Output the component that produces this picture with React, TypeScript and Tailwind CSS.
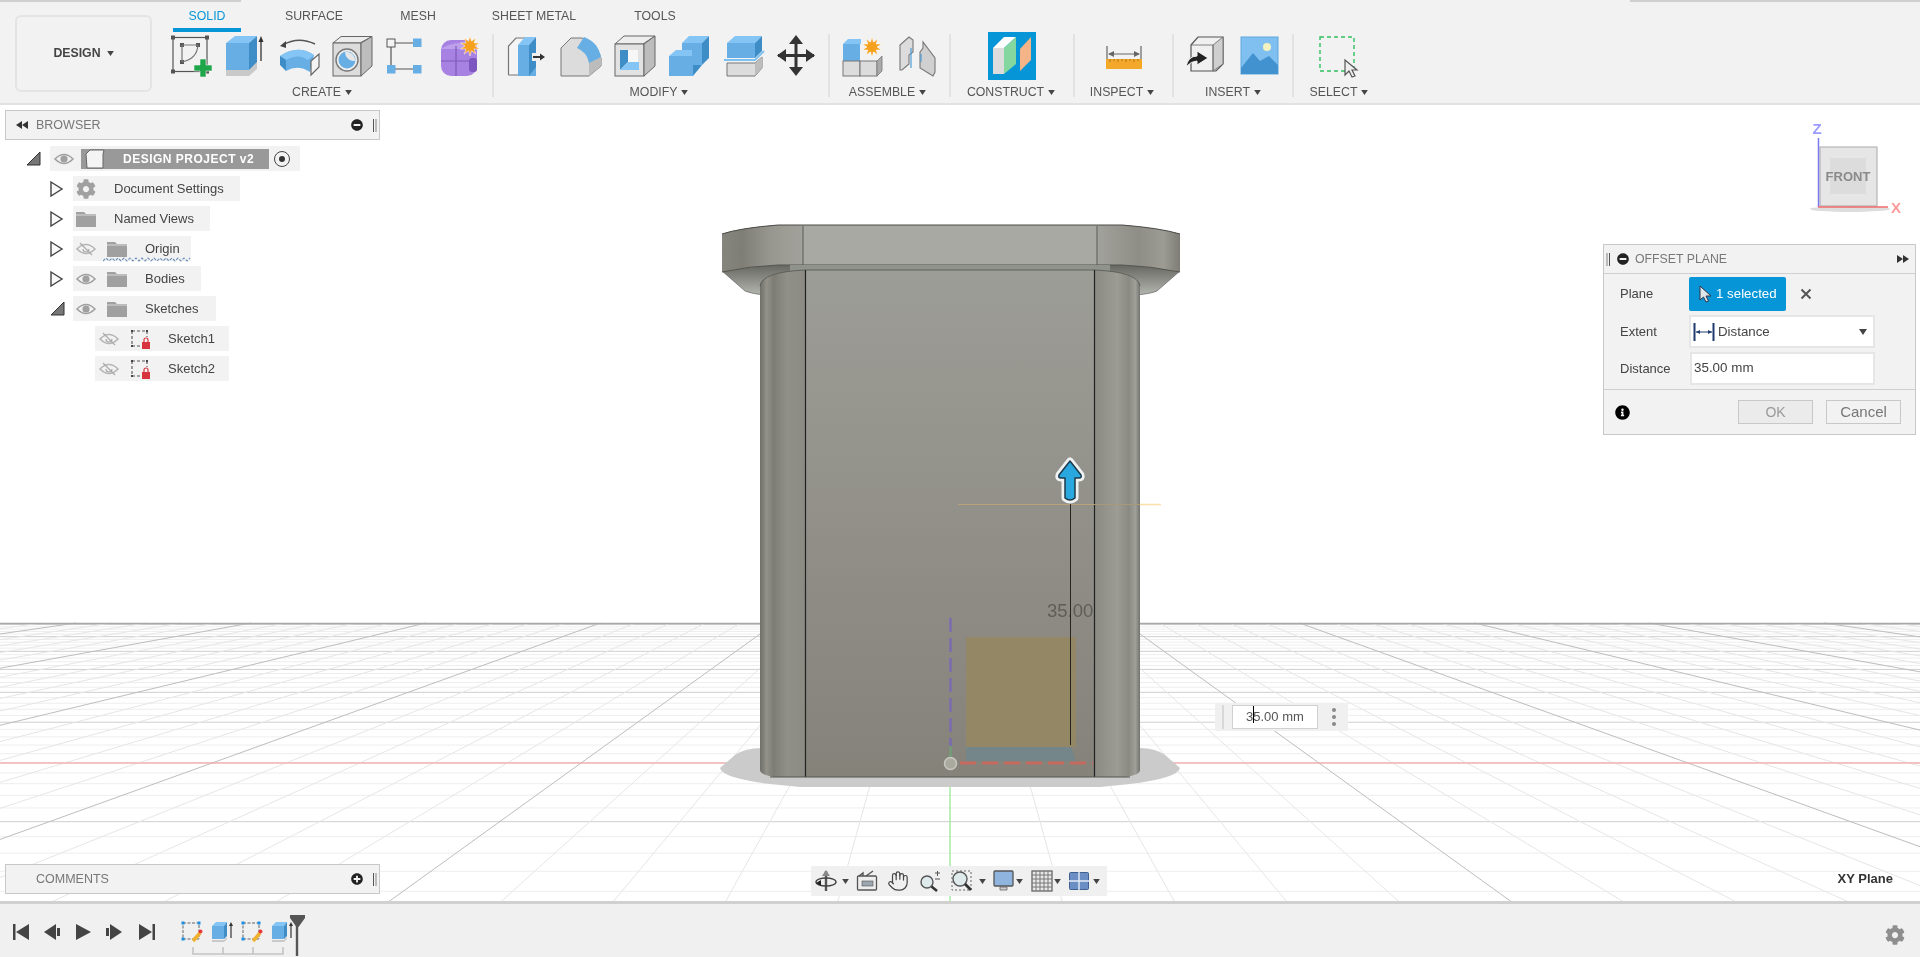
import React from "react";
import { Hand } from "lucide-react";
import { FaCog, FaInfoCircle, FaMinusCircle, FaPlusCircle } from "react-icons/fa";

const BLUE = "#66aee3";
const BLUE_TOP = "#85c5f5";
const BLUE_SIDE = "#3f8dc6";
const EDGE = "#666";

const Svg: React.FC<{ w?: number; h?: number; children: React.ReactNode }> = ({ w = 44, h = 44, children }) => (
  <svg width={w} height={h} viewBox={`0 0 ${w} ${h}`} className="shrink-0 overflow-visible">
    {children}
  </svg>
);

const Caret: React.FC<{ size?: number; className?: string }> = ({ size = 7, className = "" }) => (
  <svg width={size} height={size - 2} viewBox="0 0 8 6" className={`inline-block shrink-0 ${className}`}>
    <polygon points="0,0 8,0 4,6" fill="#444" />
  </svg>
);

/* ---------- toolbar icons ---------- */
const SketchIcon = () => (
  <Svg>
    <rect x="3" y="3.5" width="34" height="34" fill="none" stroke="#555" strokeWidth="1.2" />
    {[[3, 3.5], [37, 3.5], [3, 37.5], [37, 37.5], [12, 11], [28, 11], [12, 28]].map(([x, y]) => (
      <rect key={`${x}-${y}`} x={x - 2} y={y - 2} width="4" height="4" fill="#555" />
    ))}
    <path d="M12 11H28M12 11V28M28 11Q27 25 12 28" fill="none" stroke="#777" strokeWidth="1.2" />
    <path d="M30 25h6v6h6v6h-6v6h-6v-6h-6v-6h6z" fill="#1fa64a" stroke="#f2f2f2" strokeWidth="0.6" />
  </Svg>
);

const ExtrudeIcon = () => (
  <Svg>
    <polygon points="2,35 25,35 33,28 33,35 25,42 2,42" fill="#c9c9c9" />
    <polygon points="2,9 11,2 33,2 25,9" fill={BLUE_TOP} />
    <rect x="2" y="9" width="23" height="27" fill={BLUE} />
    <polygon points="25,9 33,2 33,28 25,36" fill={BLUE_SIDE} />
    <path d="M37 27V6" stroke="#333" strokeWidth="1.3" />
    <polygon points="37,2 34.5,8 39.5,8" fill="#333" />
  </Svg>
);

const RevolveIcon = () => (
  <Svg>
    <path d="M5 11Q20 2 37 10" fill="none" stroke="#555" strokeWidth="1.4" />
    <polygon points="2,12 8,7 8,14" fill="#444" />
    <path d="M2 22Q20 10 36 21L32 38Q20 30 8 37Z" fill={BLUE} />
    <path d="M2 22Q20 10 36 21L30 26Q20 19 8 26Z" fill={BLUE_TOP} />
    <path d="M2 22L8 26V37L2 31Z" fill={BLUE_SIDE} />
    <polygon points="33,27 41,20 41,33 33,41" fill="#f4f4f4" stroke="#666" strokeWidth="1.2" />
  </Svg>
);

const HoleIcon = () => (
  <Svg>
    <polygon points="1,9 9,2.5 40,2.5 28,9" fill="#ececec" stroke={EDGE} strokeWidth="1" />
    <rect x="1" y="9" width="28" height="33" fill="#dcdcdc" stroke={EDGE} strokeWidth="1" />
    <polygon points="29,9 40,2.5 40,32 29,42" fill="#bdbdbd" stroke={EDGE} strokeWidth="1" />
    <circle cx="15" cy="26" r="11" fill="#eee" stroke="#777" strokeWidth="1.4" />
    <circle cx="15" cy="26" r="8.5" fill={BLUE} />
    <path d="M13 18A9 9 0 0 0 23 27 8.5 8.5 0 0 0 13 18Z" fill="#e6e6e6" />
  </Svg>
);

const PatternIcon = () => (
  <Svg>
    <path d="M9 9H28M5 13V31M9 35H28" stroke="#555" strokeWidth="1.2" />
    <rect x="1" y="5" width="8" height="8" fill="#f4f4f4" stroke="#555" />
    <rect x="27" y="4.5" width="8.5" height="8.5" fill={BLUE} />
    <rect x="1" y="31" width="8.5" height="8.5" fill={BLUE} />
    <rect x="27" y="31" width="8.5" height="8.5" fill={BLUE} />
  </Svg>
);

const Star: React.FC<{ cx: number; cy: number; r: number }> = ({ cx, cy, r }) => {
  const pts = Array.from({ length: 20 }, (_, i) => {
    const a = (i * Math.PI) / 10;
    const d = i % 2 ? r * 0.5 : r;
    return `${cx + d * Math.sin(a)},${cy - d * Math.cos(a)}`;
  }).join(" ");
  return <polygon points={pts} fill="#f5a11e" stroke="#fff" strokeWidth="0.5" />;
};

const FormIcon = () => (
  <Svg>
    <rect x="1" y="6" width="36" height="36" rx="10" fill="#a782e2" />
    <path d="M1 15Q10 8 33 8L37 12V15H1Z" fill="#bca0ec" />
    <rect x="29" y="24" width="8" height="14" rx="3" fill="#7e56c0" />
    <path d="M1 27H30M16 12V42" stroke="#7d5bb8" strokeWidth="1.2" />
    <Star cx={30} cy={12} r={10} />
  </Svg>
);

const PressPullIcon = () => (
  <Svg>
    <polygon points="2.5,41 2.5,12 10,4 12,4 12,41" fill="#f4f4f4" />
    <path d="M2.5 41H12M2.5 41V12L10 4H20" fill="none" stroke="#777" strokeWidth="1.2" />
    <polygon points="12,11 19,3 30,3 23,11" fill={BLUE_TOP} />
    <rect x="12" y="11" width="18" height="31" fill={BLUE} />
    <polygon points="23,11 30,3 30,33 23,42" fill={BLUE_SIDE} />
    <rect x="26" y="19" width="5" height="8" fill="#eee" />
    <path d="M27 23H36" stroke="#333" strokeWidth="2" />
    <polygon points="39,23 34,19.5 34,26.5" fill="#333" />
  </Svg>
);

const FilletIcon = () => (
  <Svg>
    <path d="M1 42V14L11 4H22Q34 8 41 24V32L29 42Z" fill="#dcdcdc" stroke="#777" strokeWidth="1" />
    <polygon points="29,42 29,28 41,20 41,32" fill="#bcbcbc" />
    <path d="M17 14L24 3Q38 8 41 23L29 29Q27 18 17 14Z" fill={BLUE} />
  </Svg>
);

const ShellIcon = () => (
  <Svg>
    <polygon points="1,10 10,2 41,2 29,10" fill="#eee" stroke={EDGE} strokeWidth="1" />
    <rect x="1" y="10" width="29" height="32" fill="#e2e2e2" stroke={EDGE} strokeWidth="1" />
    <polygon points="30,10 41,2 41,32 30,42" fill="#bdbdbd" stroke={EDGE} strokeWidth="1" />
    <rect x="6" y="16" width="18" height="20" fill="#f7f7f7" />
    <polygon points="6,16 14,16 14,28 6,36" fill={BLUE_SIDE} />
    <polygon points="14,28 25,28 25,36 6,36" fill={BLUE_TOP} />
  </Svg>
);

const CombineIcon = () => (
  <Svg>
    <polygon points="14,9 21,2 41,2 34,9" fill={BLUE_TOP} />
    <rect x="14" y="9" width="20" height="22" fill={BLUE} />
    <polygon points="34,9 41,2 41,24 34,31" fill={BLUE_SIDE} />
    <polygon points="1,22 8,16 24,16 24,22" fill={BLUE_TOP} />
    <rect x="1" y="22" width="24" height="20" fill={BLUE} />
    <polygon points="25,31 34,31 25,42" fill={BLUE_SIDE} />
  </Svg>
);

const OffsetIcon = () => (
  <Svg>
    <polygon points="5,9 13,2 40,2 33,9" fill={BLUE_TOP} />
    <rect x="5" y="9" width="28" height="15" fill={BLUE} />
    <polygon points="33,9 40,2 40,17 33,24" fill={BLUE_SIDE} />
    <path d="M2 26H33L42 17" fill="none" stroke="#7cc1f2" strokeWidth="1.8" />
    <path d="M5 29H33L40 23V34L33 42H5Z" fill="#dcdcdc" stroke="#777" strokeWidth="1" />
    <polygon points="33,29 40,23 40,34 33,42" fill="#bdbdbd" />
  </Svg>
);

const MoveIcon = () => (
  <Svg>
    <path d="M20 4V39M2 21.5H38" stroke="#333" strokeWidth="3" />
    <polygon points="20,1 13,10 27,10" fill="#333" />
    <polygon points="20,42 13,33 27,33" fill="#333" />
    <polygon points="1,21.5 10,15 10,28" fill="#333" />
    <polygon points="39,21.5 30,15 30,28" fill="#333" />
  </Svg>
);

const NewComponentIcon = () => (
  <Svg>
    <polygon points="2,10 7,5 20,5 20,10" fill={BLUE_TOP} />
    <rect x="2" y="10" width="17" height="17" fill={BLUE} />
    <rect x="2" y="27" width="17" height="15" fill="#dcdcdc" stroke="#777" />
    <rect x="19" y="27" width="17" height="15" fill="#dcdcdc" stroke="#777" />
    <polygon points="36,27 41,22 41,37 36,42" fill="#aaa" stroke="#777" strokeWidth="0.8" />
    <Star cx={31} cy={13} r={10} />
  </Svg>
);

const JointIcon = () => (
  <Svg>
    <path d="M5 36V11L14 3L18 6V18L14 21V30L7 36Z" fill="#dcdcdc" stroke="#777" strokeWidth="1.1" />
    <path d="M25 18L28 14V8L40 24V38L38 42L25 34Z" fill="#d0d0d0" stroke="#777" strokeWidth="1.1" />
    <path d="M16 14V34M26 20V28" stroke="#4a9ed8" strokeWidth="1.2" />
  </Svg>
);

const ConstructIcon = () => (
  <Svg w={48} h={48}>
    <rect width="48" height="48" fill="#0696d7" />
    <polygon points="5,16 16,5 28,5 16,16" fill="#fff" />
    <rect x="5" y="16" width="11" height="26" fill="#dcdcdc" />
    <polygon points="16,16 28,5 28,32 16,42" fill="#85d7a0" />
    <polygon points="32,17 43,5 43,28 32,39" fill="#f5b488" />
  </Svg>
);

const InspectIcon = () => (
  <Svg w={36} h={44}>
    <path d="M1 12V28M35 12V28M3 20H33" stroke="#666" strokeWidth="1.2" />
    <polygon points="2,20 8,17 8,23" fill="#666" />
    <polygon points="34,20 28,17 28,23" fill="#666" />
    <rect x="0" y="25" width="36" height="10" fill="#f4a82a" />
    <path d="M4 25v3M8 25v2M12 25v3M16 25v2M20 25v3M24 25v2M28 25v3M32 25v2" stroke="#9a6a10" strokeWidth="0.8" />
  </Svg>
);

const InsertCubeIcon = () => (
  <Svg>
    <path d="M8 11L15 3H40V30L33 37H8Z" fill="#f0f0f0" stroke="#555" strokeWidth="1.2" />
    <polygon points="30,11 40,3 40,30 30,37" fill="#cfcfcf" stroke="#666" strokeWidth="0.8" />
    <path d="M8 11H30V37" fill="none" stroke="#666" strokeWidth="0.8" />
    <path d="M3 33Q5 22 14 22V17L25 24L14 31V27Q8 27 3 33Z" fill="#222" stroke="#f2f2f2" />
  </Svg>
);

const InsertImageIcon = () => (
  <Svg>
    <rect x="2" y="3" width="37" height="37" fill="#80c0f0" stroke="#5fa8dd" />
    <path d="M2 34L14 19L21 27L30 22L39 31V40H2Z" fill="#4192cf" />
    <circle cx="28" cy="13" r="4" fill="#f5f2c2" />
  </Svg>
);

const SelectIcon = () => (
  <Svg>
    <rect x="3" y="3" width="34" height="34" fill="none" stroke="#2fc05e" strokeWidth="1.4" strokeDasharray="4 3" />
    <path d="M28 26L28 41L32 37L35 43L38 42L35 36L40 36Z" fill="#eee" stroke="#555" strokeWidth="1.2" />
  </Svg>
);

const ToolGroup: React.FC<{ label: string; className: string; rowClass?: string; labelClass?: string; children: React.ReactNode }> = ({
  label,
  className,
  rowClass = "justify-center",
  labelClass = "",
  children,
}) => (
  <div className={`flex flex-col items-center ${className}`}>
    <div className={`flex h-[44px] w-full items-center gap-[10px] ${rowClass}`}>{children}</div>
    <div className={`mt-[4px] flex h-[20px] items-center gap-1 text-[12.3px] text-[#555] ${labelClass}`}>
      {label}
      <Caret />
    </div>
  </div>
);

const Sep = () => <div className="h-[63px] w-[2px] shrink-0 bg-[#e2e2e2]" />;

const tabs = [
  { label: "SOLID", w: "w-[68px]", active: true },
  { label: "SURFACE", w: "w-[146px]" },
  { label: "MESH", w: "w-[62px]" },
  { label: "SHEET METAL", w: "w-[170px]" },
  { label: "TOOLS", w: "w-[72px]" },
];

const Toolbar = () => (
  <div className="flex h-[103px] shrink-0 border-b-2 border-[#e2e2e2] bg-[#f2f2f2]">
    <div className="ml-[15px] mt-[13px] flex h-[77px] w-[137px] items-center justify-center gap-1.5 rounded-md border-2 border-[#e4e4e4] text-[12.3px] font-bold text-[#444]">
      DESIGN
      <Caret />
    </div>
    <div className="flex flex-col">
      <div className="flex h-[32px] pl-[21px]">
        {tabs.map((t) => (
          <div
            key={t.label}
            className={`flex h-[30px] items-center justify-center border-b-4 pt-[2px] text-[12.3px] ${t.w} ${
              t.active ? "border-[#0696d7] text-[#0696d7]" : "border-transparent text-[#555]"
            }`}
          >
            {t.label}
          </div>
        ))}
      </div>
      <div className="flex items-start">
        <ToolGroup label="CREATE" className="w-[340px]" rowClass="justify-start pl-[18px]">
          <SketchIcon />
          <ExtrudeIcon />
          <RevolveIcon />
          <HoleIcon />
          <PatternIcon />
          <FormIcon />
        </ToolGroup>
        <Sep />
        <ToolGroup label="MODIFY" className="w-[334px]" rowClass="justify-start pl-[12px]" labelClass="mr-[4px]">
          <PressPullIcon />
          <FilletIcon />
          <ShellIcon />
          <CombineIcon />
          <OffsetIcon />
          <MoveIcon />
        </ToolGroup>
        <Sep />
        <ToolGroup label="ASSEMBLE" className="w-[119px]" labelClass="mr-[4px]">
          <NewComponentIcon />
          <JointIcon />
        </ToolGroup>
        <Sep />
        <ToolGroup label="CONSTRUCT" className="w-[122px]" labelClass="mr-[2px]">
          <ConstructIcon />
        </ToolGroup>
        <Sep />
        <ToolGroup label="INSPECT" className="w-[97px]" labelClass="mr-[3px]">
          <InspectIcon />
        </ToolGroup>
        <Sep />
        <ToolGroup label="INSERT" className="w-[118px]">
          <InsertCubeIcon />
          <div className="ml-[2px]">
            <InsertImageIcon />
          </div>
        </ToolGroup>
        <Sep />
        <ToolGroup label="SELECT" className="w-[90px]">
          <SelectIcon />
        </ToolGroup>
      </div>
    </div>
  </div>
);

/* ---------- viewport drawing ---------- */
const VPY = 497;
const gridDepths = Array.from({ length: 40 }, (_, i) => i - 9);
const gridColumns = Array.from({ length: 61 }, (_, i) => i - 30);

const Floor = () => (
  <>
    {gridDepths.map((m) => {
      const y = VPY + 1 / (0.00376 + m * 0.000136);
      return <line key={m} x1="0" x2="1920" y1={y} y2={y} stroke={m % 5 === 0 ? "#cfcfcf" : "#eeeeee"} strokeWidth="1" />;
    })}
    {gridColumns.map((i) => {
      const k = (i / 5) * 1.387;
      if (i === 0) return null;
      return (
        <line
          key={i}
          x1={950 + k * 126}
          x2={950 + k * 405}
          y1="623"
          y2="902"
          stroke={i % 5 === 0 ? "#bdbdbd" : "#e6e6e6"}
          strokeWidth="1"
        />
      );
    })}
    <line x1="0" x2="1920" y1="623.5" y2="623.5" stroke="#a8a8a8" strokeWidth="1.5" />
    <line x1="0" x2="1920" y1="763" y2="763" stroke="#ff9d9d" strokeWidth="1.2" />
    <line x1="950" x2="950" y1="763" y2="902" stroke="#9fe89f" strokeWidth="1.4" />
  </>
);

const Model = () => (
  <>
    <defs>
      <linearGradient id="face" x1="0" x2="0" y1="0" y2="1">
        <stop offset="0" stopColor="#9d9d97" />
        <stop offset="1" stopColor="#85827a" />
      </linearGradient>
      <linearGradient id="cornerL" x1="0" x2="1" y1="0" y2="0">
        <stop offset="0" stopColor="#6f6f69" />
        <stop offset="0.15" stopColor="#92928b" />
        <stop offset="0.3" stopColor="#7d7d76" />
        <stop offset="0.6" stopColor="#909089" />
        <stop offset="1" stopColor="#8b8b84" />
      </linearGradient>
      <linearGradient id="cornerR" x1="0" x2="1" y1="0" y2="0">
        <stop offset="0" stopColor="#8b8b84" />
        <stop offset="0.5" stopColor="#9c9c95" />
        <stop offset="0.75" stopColor="#8a8a83" />
        <stop offset="0.9" stopColor="#a0a09a" />
        <stop offset="1" stopColor="#73736d" />
      </linearGradient>
      <linearGradient id="flangeL" x1="0" x2="1" y1="0" y2="0">
        <stop offset="0" stopColor="#85857e" />
        <stop offset="0.25" stopColor="#7f7e76" />
        <stop offset="0.6" stopColor="#98978f" />
        <stop offset="1" stopColor="#a2a29c" />
      </linearGradient>
      <linearGradient id="flangeR" x1="0" x2="1" y1="0" y2="0">
        <stop offset="0" stopColor="#a2a29c" />
        <stop offset="0.5" stopColor="#8e8d86" />
        <stop offset="0.8" stopColor="#9c9b94" />
        <stop offset="1" stopColor="#7d7c75" />
      </linearGradient>
      <linearGradient id="chamfer" x1="0" x2="0" y1="0" y2="1">
        <stop offset="0" stopColor="#5f5f59" />
        <stop offset="1" stopColor="#b4b6b0" />
      </linearGradient>
    </defs>
    <path
      d="M762 748Q745 748 735 755L720 768Q722 778 770 784L800 787H1100L1130 784Q1178 778 1180 768L1165 755Q1155 748 1140 748Z"
      fill="#cbcbcb"
    />
    {/* flange underside */}
    <path d="M722 271L745 291Q752 294 765 295H1135Q1150 294 1157 291L1180 271Q1150 262 1122 262H778Q750 262 722 271Z" fill="url(#chamfer)" stroke="#555" strokeWidth="0.6" />
    {/* flange band */}
    <path d="M722 234Q740 228 778 225H1122Q1160 228 1180 234V272Q1150 266 1122 265H778Q750 266 722 272Z" fill="#a9a9a3" />
    <path d="M722 234Q740 228 778 225H803V265H778Q750 266 722 272Z" fill="url(#flangeL)" />
    <path d="M1097 225H1122Q1160 228 1180 234V272Q1150 266 1122 265H1097Z" fill="url(#flangeR)" />
    <path d="M722 234Q740 228 778 225H1122Q1160 228 1180 234" fill="none" stroke="#4c4c48" strokeWidth="1" />
    <path d="M722 272Q750 266 778 265H1122Q1150 266 1180 272" fill="none" stroke="#55554f" strokeWidth="1" />
    <rect x="790" y="265" width="320" height="6" fill="#8f938c" />
    <path d="M803 226V265M1097 226V265" stroke="#5a5a55" strokeWidth="1" />
    {/* body */}
    <path d="M760 286Q760 272 805 270V777H775Q760 775 760 770Z" fill="url(#cornerL)" />
    <path d="M1140 286Q1140 272 1095 270V777H1125Q1140 775 1140 770Z" fill="url(#cornerR)" />
    <rect x="805" y="270" width="290" height="507" fill="url(#face)" />
    <path d="M760 286Q762 272 805 270H1095Q1138 272 1140 286" fill="none" stroke="#55554f" strokeWidth="0.8" />
    <path d="M805.5 270V777M1094.5 270V777" stroke="#222" strokeWidth="1.2" />
    <path d="M770 777H1130" stroke="#55554f" strokeWidth="1" />
    {/* sketch profile + offset preview */}
    <rect x="966" y="637" width="110" height="110" fill="#938766" />
    <polygon points="966,747 1071,747 1076,761 966,761" fill="#74868a" />
    <path d="M950.5 618V746" stroke="#7a6cae" strokeWidth="2.5" strokeDasharray="14 6" />
    <path d="M950.5 746V757" stroke="#6fa07a" strokeWidth="2" />
    <path d="M960 763H1093" stroke="#c66a60" strokeWidth="3" strokeDasharray="16 6" />
    <circle cx="950.5" cy="763.5" r="6" fill="#aaaa9f" stroke="#c8c8c0" strokeWidth="1.5" />
    {/* offset plane guide */}
    <path d="M958 504.5H1094" stroke="#b8a378" strokeWidth="1.2" />
    <path d="M1094 504.5H1140" stroke="#a69a78" strokeWidth="1.2" />
    <path d="M1140 504.5H1161" stroke="#ffdfa6" strokeWidth="1.5" />
    <path d="M1070.5 504V745" stroke="#26261f" strokeWidth="1" />
    {/* manipulator arrow */}
    <path
      d="M1070 461L1081 475Q1082 478 1079 478H1075V498Q1070 502 1065 498V478H1061Q1058 478 1059 475Z"
      fill="#29a8df"
      stroke="#eef2f2"
      strokeWidth="7"
      strokeLinejoin="round"
    />
    <path
      d="M1070 461L1081 475Q1082 478 1079 478H1075V498Q1070 502 1065 498V478H1061Q1058 478 1059 475Z"
      fill="#29a8df"
      stroke="#1e3a4a"
      strokeWidth="1.5"
      strokeLinejoin="round"
    />
  </>
);

const ViewCube = () => (
  <>
    <ellipse cx="1850" cy="209" rx="40" ry="3" fill="#ddd" />
    <rect x="1820" y="147" width="57" height="59" fill="#e6e6e6" stroke="#aaa" />
    <rect x="1830" y="158" width="36" height="36" fill="#dcdcdc" />
    <text x="1848" y="181" textAnchor="middle" fontSize="13" fontWeight="700" fill="#8a8a8a" fontFamily="'Liberation Sans', sans-serif">
      FRONT
    </text>
    <path d="M1818.5 138V207" stroke="#7a7af0" strokeWidth="1.5" />
    <path d="M1818 207H1888" stroke="#ef6a6a" strokeWidth="1.5" />
    <text x="1817" y="134" textAnchor="middle" fontSize="15" fontWeight="700" fill="#9a9aff" fontFamily="'Liberation Sans', sans-serif">
      Z
    </text>
    <text x="1896" y="213" textAnchor="middle" fontSize="15" fontWeight="700" fill="#ff9a9a" fontFamily="'Liberation Sans', sans-serif">
      X
    </text>
  </>
);

/* ---------- browser tree ---------- */
const EyeIcon: React.FC<{ off?: boolean }> = ({ off }) => (
  <Svg w={20} h={14}>
    <path d="M1 7Q10 -2 19 7Q10 16 1 7Z" fill="none" stroke={off ? "#b5b5b5" : "#a0a0a0"} strokeWidth="1.6" />
    {off ? (
      <path d="M4 1L16 13M7 7a3 3 0 0 0 6 0" fill="none" stroke="#aaa" strokeWidth="1.2" />
    ) : (
      <circle cx="10" cy="7" r="3.6" fill="#a0a0a0" />
    )}
  </Svg>
);

const FolderIcon = () => (
  <Svg w={20} h={16}>
    <path d="M0 1H8L10 3H20V16H0Z" fill="#a0a0a0" />
    <path d="M0 4H20" stroke="#e8e8e8" strokeWidth="0.8" />
  </Svg>
);

const SketchLockIcon = () => (
  <Svg w={20} h={20}>
    <path d="M2 2H17M2 2V17M2 17H11M17 2V8" stroke="#555" strokeWidth="1.1" strokeDasharray="3 2" />
    <rect x="1" y="1" width="2" height="2" fill="#444" />
    <rect x="16" y="1" width="2" height="2" fill="#444" />
    <rect x="1" y="16" width="2" height="2" fill="#444" />
    <rect x="12" y="13" width="8" height="7" fill="#d8343f" />
    <path d="M14 13V11A2 2 0 0 1 18 11V13" fill="none" stroke="#d8343f" strokeWidth="1.2" />
  </Svg>
);

const Expander: React.FC<{ open?: boolean }> = ({ open }) =>
  open ? (
    <Svg w={15} h={15}>
      <polygon points="1,14 14,14 14,1" fill="#777" stroke="#333" strokeWidth="1" />
    </Svg>
  ) : (
    <Svg w={13} h={16}>
      <polygon points="1,1 12,8 1,15" fill="#fafafa" stroke="#444" strokeWidth="1.4" />
    </Svg>
  );

const rowBase = "flex h-[25px] items-center bg-[#f2f2f2] text-[13px] text-[#444]";

const FolderRow: React.FC<{ label: string; w: string; hidden?: boolean; open?: boolean }> = ({ label, w, hidden, open }) => (
  <div className="relative flex items-center pl-[45px]">
    <div className="flex w-[23px] items-center">
      <Expander open={open} />
    </div>
    <div className={`${rowBase} pl-[3px] ${w}`}>
      <EyeIcon off={hidden} />
      <div className="ml-[11px]">
        <FolderIcon />
      </div>
      <span className="ml-[18px]">{label}</span>
    </div>
    {hidden && (
      <svg width="88" height="5" viewBox="0 0 88 5" className="absolute left-[98px] top-[21px]">
        <path d="M0 4 L3 1 L6 4 L9 1 L12 4 L15 1 L18 4 L21 1 L24 4 L27 1 L30 4 L33 1 L36 4 L39 1 L42 4 L45 1 L48 4 L51 1 L54 4 L57 1 L60 4 L63 1 L66 4 L69 1 L72 4 L75 1 L78 4 L81 1 L84 4 L87 1" fill="none" stroke="#6b8fb8" strokeWidth="1.1" strokeDasharray="3 1.5" />
      </svg>
    )}
  </div>
);

const SketchRow: React.FC<{ label: string }> = ({ label }) => (
  <div className="flex items-center pl-[90px]">
    <div className={`${rowBase} w-[134px] pl-[4px]`}>
      <EyeIcon off />
      <div className="ml-[11px]">
        <SketchLockIcon />
      </div>
      <span className="ml-[18px]">{label}</span>
    </div>
  </div>
);

const PanelHeader: React.FC<{ label: string; icon: React.ReactNode; left?: React.ReactNode; className: string }> = ({ label, icon, left, className }) => (
  <div className={`flex h-[30px] w-[375px] items-center border border-[#c8c8c8] bg-[#f2f2f2] text-[12.5px] text-[#777] ${className}`}>
    <div className="flex w-[30px] justify-center pl-[2px]">{left}</div>
    <span>{label}</span>
    <div className="ml-auto flex items-center gap-[10px] pr-[1px]">
      {icon}
      <div className="flex h-[13px] w-[5px] gap-[1px]">
        <div className="w-[1px] bg-[#555]" />
        <div className="w-[2px] bg-[#bbb]" />
      </div>
    </div>
  </div>
);

const RewindGlyph = () => (
  <Svg w={12} h={8}>
    <polygon points="0,4 6,0 6,8" fill="#333" />
    <polygon points="6,4 12,0 12,8" fill="#333" />
  </Svg>
);

const Browser = () => (
  <div className="absolute left-[5px] top-[5px] w-[375px]">
    <PanelHeader label="BROWSER" left={<RewindGlyph />} icon={<FaMinusCircle className="text-[12px] text-[#222]" />} className="" />
    <div className="mt-[6px] flex flex-col gap-[5px]">
      <div className="flex items-center pl-[21px]">
        <div className="flex w-[24px] items-center">
          <Expander open />
        </div>
        <div className={`${rowBase} w-[250px] pl-[4px]`}>
          <EyeIcon />
          <div className="ml-[7px] flex h-[20px] w-[188px] items-center bg-[#999] pl-[4px] text-[12px] font-bold tracking-[0.5px] text-white">
            <Svg w={20} h={20}>
              <path d="M1 5L5 1H19L18 5V19H2Z" fill="#f4f4f4" stroke="#666" strokeWidth="1" />
            </Svg>
            <span className="ml-[18px]">DESIGN PROJECT v2</span>
          </div>
          <div className="ml-[5px] flex h-[16px] w-[16px] items-center justify-center rounded-full border border-[#444]">
            <div className="h-[6px] w-[6px] rounded-full bg-[#333]" />
          </div>
        </div>
      </div>
      <div className="flex items-center pl-[45px]">
        <div className="w-[23px]">
          <Expander />
        </div>
        <div className={`${rowBase} w-[167px] pl-[3px]`}>
          <FaCog className="text-[20px] text-[#a0a0a0]" />
          <span className="ml-[18px]">Document Settings</span>
        </div>
      </div>
      <div className="flex items-center pl-[45px]">
        <div className="w-[23px]">
          <Expander />
        </div>
        <div className={`${rowBase} w-[137px] pl-[3px]`}>
          <FolderIcon />
          <span className="ml-[18px]">Named Views</span>
        </div>
      </div>
      <FolderRow label="Origin" w="w-[118px]" hidden />
      <FolderRow label="Bodies" w="w-[128px]" />
      <FolderRow label="Sketches" w="w-[143px]" open />
      <SketchRow label="Sketch1" />
      <SketchRow label="Sketch2" />
    </div>
  </div>
);

/* ---------- offset plane dialog ---------- */
const OffsetDialog = () => (
  <div className="absolute left-[1603px] top-[139px] w-[313px] border border-[#c8c8c8] bg-[#f2f2f2] text-[13px] text-[#444]">
    <div className="flex h-[29px] items-center border-b border-[#d0d0d0] pl-[2px] pr-[6px] text-[12.3px] text-[#777]">
      <div className="flex h-[13px] w-[5px] gap-[1px]">
        <div className="w-[2px] bg-[#bbb]" />
        <div className="w-[1px] bg-[#555]" />
      </div>
      <FaMinusCircle className="ml-[6px] text-[12px] text-[#222]" />
      <span className="ml-[6px]">OFFSET PLANE</span>
      <div className="ml-auto rotate-180">
        <RewindGlyph />
      </div>
    </div>
    <div className="flex flex-col pb-[4px] pl-[16px] pt-[2px]">
      <div className="flex h-[35px] items-center">
        <span className="w-[69px]">Plane</span>
        <div className="flex h-[34px] w-[97px] items-center rounded-[2px] bg-[#0696d7] pl-[9px] text-[13.3px] text-white">
          <svg width="14" height="18" viewBox="0 0 14 18">
            <path d="M2 1V15L5.5 12L8 17L10.5 16L8 11H13Z" fill="#dfe6ea" stroke="#334" strokeWidth="1" />
          </svg>
          <span className="ml-[4px]">1 selected</span>
        </div>
        <svg width="12" height="12" viewBox="0 0 12 12" className="ml-[14px]">
          <path d="M1.5 1.5L10.5 10.5M10.5 1.5L1.5 10.5" stroke="#555" strokeWidth="2" />
        </svg>
      </div>
      <div className="mt-[4px] flex h-[33px] items-center">
        <span className="w-[69px]">Extent</span>
        <div className="flex h-[33px] w-[186px] items-center border-2 border-[#e6e6e6] bg-white pl-[2px] pr-[6px] text-[13.3px]">
          <svg width="22" height="20" viewBox="0 0 22 20">
            <path d="M1.5 1V19M20.5 1V19" stroke="#1e3a6e" strokeWidth="2" />
            <path d="M3 10H19" stroke="#1e3a6e" strokeWidth="1" />
            <polygon points="3,10 7,8 7,12" fill="#1e3a6e" />
            <polygon points="19,10 15,8 15,12" fill="#1e3a6e" />
          </svg>
          <span className="ml-[3px]">Distance</span>
          <Caret size={8} className="ml-auto" />
        </div>
      </div>
      <div className="mt-[4px] flex h-[33px] items-center">
        <span className="w-[70px]">Distance</span>
        <div className="flex h-[33px] w-[185px] items-center border-2 border-[#e6e6e6] bg-white pl-[2px] text-[13.4px]">35.00 mm</div>
      </div>
    </div>
    <div className="flex h-[45px] items-center border-t border-[#d0d0d0] pl-[11px] pr-[14px]">
      <FaInfoCircle className="text-[15px] text-black" />
      <div className="ml-auto flex h-[24px] w-[75px] items-center justify-center border border-[#c8c8c8] bg-[#ebebeb] text-[14px] text-[#999]">OK</div>
      <div className="ml-[13px] flex h-[24px] w-[75px] items-center justify-center border border-[#c8c8c8] bg-[#f2f2f2] text-[15px] text-[#777]">Cancel</div>
    </div>
  </div>
);

const DimensionInput = () => (
  <div className="absolute left-[1215px] top-[598px] flex h-[28px] w-[133px] items-center bg-[#f0f0f0]">
    <div className="ml-[7px] h-[24px] w-[2px] bg-[#d8d8d8]" />
    <div className="ml-[8px] flex h-[24px] w-[86px] items-center border border-[#d0d0d0] bg-white pl-[13px] text-[13px] text-[#555]">
      <span className="relative">
        35.00 mm
        <span className="absolute left-[7px] top-[-1px] h-[17px] w-[1px] bg-black" />
      </span>
    </div>
    <div className="ml-[14px] flex flex-col gap-[3px]">
      <div className="h-[4px] w-[4px] rounded-full bg-[#888]" />
      <div className="h-[4px] w-[4px] rounded-full bg-[#888]" />
      <div className="h-[4px] w-[4px] rounded-full bg-[#888]" />
    </div>
  </div>
);

/* ---------- bottom nav bar ---------- */
const NavBar = () => (
  <div className="absolute left-[811px] top-[761px] flex h-[30px] w-[296px] items-center bg-[#f0f0f0] pl-[4px]">
    <Svg w={22} h={22}>
      <path d="M11 1V21" stroke="#555" strokeWidth="2.4" />
      <polygon points="11,0 7,6 15,6" fill="#888" />
      <ellipse cx="11" cy="12" rx="10" ry="4" fill="none" stroke="#444" strokeWidth="1.4" />
      <polygon points="1,13 6,10 6,16" fill="#222" />
    </Svg>
    <Caret className="ml-[5px]" />
    <div className="ml-[7px]">
      <Svg w={22} h={22}>
        <rect x="1.5" y="6" width="19" height="14" rx="1" fill="#eee" stroke="#555" strokeWidth="1.3" />
        <rect x="6" y="11" width="11" height="5" fill="#9ba6b0" stroke="#555" strokeWidth="0.6" />
        <path d="M3 6L7 3V6M10 6L17 1" stroke="#555" strokeWidth="1.4" fill="none" />
      </Svg>
    </div>
    <Hand size={22} strokeWidth={1.3} className="ml-[9px] text-[#444]" />
    <div className="ml-[10px]">
      <Svg w={22} h={22}>
        <circle cx="8" cy="12" r="6" fill="#dfeaec" stroke="#555" strokeWidth="1.4" />
        <path d="M12.5 16.5L18 21" stroke="#333" strokeWidth="2.6" />
        <path d="M16 3H21M18.5 1V6M16 9H21" stroke="#555" strokeWidth="1" />
      </Svg>
    </div>
    <div className="ml-[10px]">
      <Svg w={22} h={22}>
        <rect x="1" y="1" width="19" height="19" fill="none" stroke="#666" strokeDasharray="2 2" />
        <circle cx="9" cy="9" r="7" fill="#dfeaec" stroke="#555" strokeWidth="1.4" />
        <path d="M14 14L20 20" stroke="#333" strokeWidth="2.8" />
      </Svg>
    </div>
    <Caret className="ml-[6px]" />
    <div className="ml-[7px]">
      <Svg w={22} h={22}>
        <rect x="1" y="1" width="19" height="15" rx="1" fill="#8fb4de" stroke="#555" strokeWidth="1.3" />
        <path d="M7 17H14V20H7Z" fill="#ccc" stroke="#666" strokeWidth="0.8" />
      </Svg>
    </div>
    <Caret className="ml-[1px]" />
    <div className="ml-[8px]">
      <Svg w={22} h={22}>
        <rect x="1" y="1" width="20" height="20" fill="#e8e8e8" stroke="#666" strokeWidth="1.3" />
        <path d="M5 1V21M9 1V21M13 1V21M17 1V21M1 5H21M1 9H21M1 13H21M1 17H21" stroke="#777" strokeWidth="1" />
      </Svg>
    </div>
    <Caret className="ml-[1px]" />
    <div className="ml-[8px]">
      <Svg w={20} h={18}>
        <rect x="0.5" y="0.5" width="19" height="17" rx="1" fill="#6b8fc4" stroke="#40608f" />
        <path d="M10 0V18M0 9H20" stroke="#e6edf6" strokeWidth="1.4" />
      </Svg>
    </div>
    <Caret className="ml-[4px]" />
  </div>
);

/* ---------- timeline ---------- */
const TimelineSketch = () => (
  <Svg w={22} h={22}>
    <rect x="2" y="2" width="16" height="16" fill="none" stroke="#666" strokeWidth="1" strokeDasharray="3 1.5" />
    {[[2, 2], [18, 2], [2, 18]].map(([x, y]) => (
      <rect key={`${x}-${y}`} x={x - 1.5} y={y - 1.5} width="3" height="3" fill="#1c8ee0" />
    ))}
    <path d="M12 20L19 12" stroke="#f0b030" strokeWidth="3.5" />
    <circle cx="19.5" cy="10.5" r="2" fill="#e83a3a" />
  </Svg>
);

const TimelineExtrude = () => (
  <Svg w={22} h={22}>
    <polygon points="1,5 5,1 16,1 13,5" fill={BLUE_TOP} />
    <rect x="1" y="5" width="12" height="13" fill={BLUE} />
    <polygon points="13,5 16,1 16,15 13,18" fill={BLUE_SIDE} />
    <path d="M1 19H13L16 16V18L13 21H1Z" fill="#c9c9c9" />
    <path d="M20 17V4" stroke="#333" strokeWidth="1.2" />
    <polygon points="20,1 18,5 22,5" fill="#333" />
  </Svg>
);

const Timeline = () => (
  <div className="relative flex h-[56px] shrink-0 items-center border-t-[3px] border-[#d0d0d0] bg-[#f0f0f0] pl-[13px] pt-[2px]">
    <svg width="142" height="16" viewBox="0 0 142 16" className="shrink-0">
      <g fill="#444">
        <rect x="0" y="0" width="2.5" height="16" />
        <polygon points="16,0 16,16 3,8" />
        <polygon points="31,8 43,0 43,16" />
        <rect x="44" y="4" width="3" height="8" />
        <polygon points="63,0 78,8 63,16" />
        <rect x="93" y="4" width="3" height="8" />
        <polygon points="97,0 109,8 97,16" />
        <polygon points="126,0 139,8 126,16" />
        <rect x="139.5" y="0" width="2.5" height="16" />
      </g>
    </svg>
    <div className="ml-[26px] flex gap-[8px]">
      <TimelineSketch />
      <TimelineExtrude />
      <TimelineSketch />
      <TimelineExtrude />
    </div>
    <svg width="92" height="8" viewBox="0 0 92 8" className="absolute left-[192px] top-[43px]">
      <path d="M1 0V7H91V0M31 0V7M61 0V7" fill="none" stroke="#c4c4c4" strokeWidth="1.6" />
    </svg>
    <svg width="16" height="41" viewBox="0 0 16 41" className="absolute left-[290px] top-[11px]">
      <path d="M7 10V41" stroke="#555" strokeWidth="2.4" />
      <polygon points="0,0 15,0 15,3 8.5,12 6.5,12 0,3" fill="#555" />
    </svg>
    <FaCog className="absolute right-[15px] top-[21px] text-[20px] text-[#8e8e8e]" />
  </div>
);

export default function App() {
  return (
    <div className="flex h-[957px] w-[1920px] flex-col overflow-hidden bg-white font-['Liberation_Sans',Arial,sans-serif] blur-[0.4px]">
      <div className="flex h-[2px] shrink-0 justify-between bg-[#f2f2f2]">
        <div className="w-[241px] bg-[#cfcfcf]" />
        <div className="w-[290px] bg-[#cfcfcf]" />
      </div>
      <Toolbar />
      <div className="relative flex-1 bg-white">
        <svg width="1920" height="797" viewBox="0 105 1920 797" className="absolute inset-0">
          <Floor />
          <Model />
          <ViewCube />
        </svg>
        <span className="absolute left-[1047px] top-[495px] text-[18.5px] leading-[22px] text-[#5e5e58]">35.00</span>
        <svg width="2" height="40" className="absolute left-[1070px] top-[490px]">
          <path d="M0.5 0V40" stroke="#26261f" strokeWidth="1" />
        </svg>
        <Browser />
        <PanelHeader
          label="COMMENTS"
          icon={<FaPlusCircle className="text-[12px] text-[#222]" />}
          className="absolute bottom-[7px] left-[5px]"
        />
        <OffsetDialog />
        <DimensionInput />
        <NavBar />
        <span className="absolute bottom-[13px] right-[27px] text-[13px] font-bold text-[#333]">XY Plane</span>
      </div>
      <Timeline />
    </div>
  );
}
